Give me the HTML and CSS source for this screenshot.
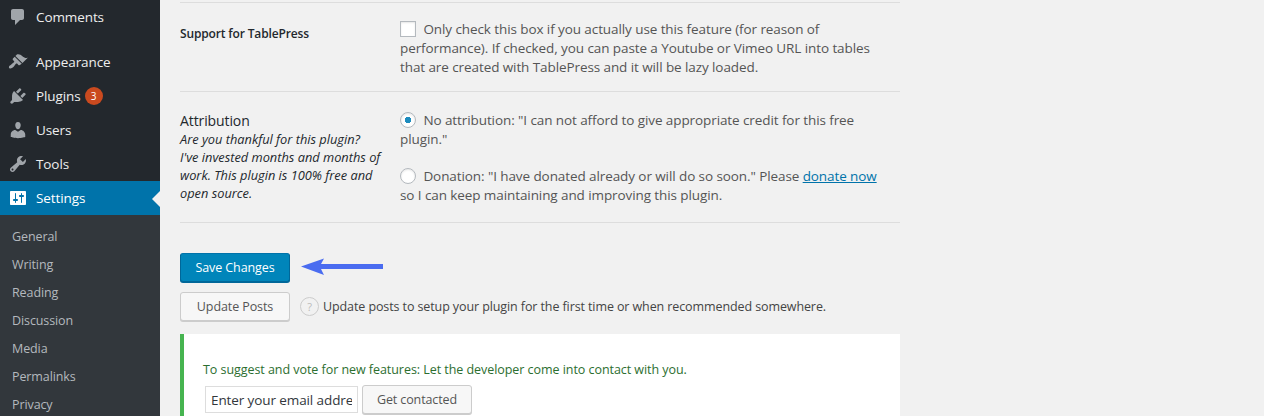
FILE: index.html
```html
<!DOCTYPE html>
<html lang="en">
<head>
  <meta charset="UTF-8">
  <title>Settings</title>
  <link rel="stylesheet" href="styles.css">
</head>
<body>

  <div class="sidebar">
    <ul class="menu">
      <li class="menu-item menu-gap">
        <svg class="menu-icon" viewBox="0 0 20 20"><path d="M5 2h9c1.1 0 2 .9 2 2v7c0 1.1-.9 2-2 2h-2l-5 5v-5H5c-1.1 0-2-.9-2-2V4c0-1.1.9-2 2-2z"/></svg>
        Comments
      </li>
      <li class="menu-item">
        <svg class="menu-icon" viewBox="0 0 20 20"><path d="M14.48 11.06L7.41 3.99l1.5-1.5c.5-.56 2.3-.47 3.51.32 1.21.8 1.43 1.28 2.91 2.1 1.18.64 2.45 1.26 4.45.85zm-.71.71L6.7 4.7 4.93 6.47c-.39.39-.39 1.02 0 1.41l1.06 1.06c.39.39.39 1.03 0 1.42-.6.6-1.43 1.11-2.21 1.69-.35.26-.7.53-1.01.84C1.43 13.23.4 14.85 1.19 15.94c.79 1.08 2.85.5 4.22-.87.31-.31.58-.66.84-1.01.58-.78 1.09-1.61 1.69-2.21.39-.39 1.02-.39 1.41 0l1.06 1.06c.39.39 1.02.39 1.41 0z"/></svg>
        Appearance
      </li>
      <li class="menu-item">
        <svg class="menu-icon" viewBox="0 0 20 20"><path d="M13.11 4.36L9.87 7.6 8 5.73l3.24-3.24c.35-.34 1.05-.2 1.56.32.52.51.66 1.21.31 1.55zm-8 1.77l.91-1.12 9.01 9.01-1.19.84c-.71.71-2.63 1.16-3.82 1.16H6.14L4.9 17.26c-.59.59-1.54.59-2.12 0-.59-.58-.59-1.53 0-2.12l1.24-1.24v-3.88c0-1.13.4-3.19 1.09-3.89zm7.26 3.97l3.24-3.24c.34-.35 1.04-.21 1.55.31.52.51.66 1.21.31 1.55l-3.24 3.25z"/></svg>
        Plugins <span class="count">3</span>
      </li>
      <li class="menu-item">
        <svg class="menu-icon" viewBox="0 0 20 20"><path d="M10 9.25c-2.27 0-2.73-3.44-2.73-3.44C7 4.02 7.82 2 9.97 2c2.16 0 2.98 2.02 2.71 3.81 0 0-.41 3.44-2.68 3.44zm0 2.57L12.72 10c2.39 0 4.52 2.33 4.52 4.53v2.49s-3.65 1.13-7.24 1.13c-3.65 0-7.24-1.13-7.24-1.13v-2.49c0-2.25 1.94-4.48 4.47-4.48z"/></svg>
        Users
      </li>
      <li class="menu-item">
        <svg class="menu-icon" viewBox="0 0 20 20"><path d="M16.68 9.77c-1.34 1.34-3.3 1.67-4.95.99l-5.41 6.52c-.99.99-2.59.99-3.58 0s-.99-2.59 0-3.57l6.52-5.42c-.68-1.65-.35-3.61.99-4.95 1.28-1.28 3.12-1.62 4.72-1.06l-2.89 2.89 2.82 2.82 2.86-2.87c.53 1.58.18 3.39-1.08 4.65zM3.81 16.21c.4.39 1.04.39 1.43 0 .4-.4.4-1.04 0-1.43-.39-.4-1.03-.4-1.43 0-.39.39-.39 1.03 0 1.43z"/></svg>
        Tools
      </li>
      <li class="menu-item current">
        <svg class="menu-icon" viewBox="0 0 20 20"><path d="M18 16V4c0-.55-.45-1-1-1H3c-.55 0-1 .45-1 1v12c0 .55.45 1 1 1h14c.55 0 1-.45 1-1zM8 11h1c.55 0 1 .45 1 1s-.45 1-1 1H8v1.5c0 .28-.22.5-.5.5s-.5-.22-.5-.5V13H6c-.55 0-1-.45-1-1s.45-1 1-1h1V5.5c0-.28.22-.5.5-.5s.5.22.5.5V11zm5-2h-1c-.55 0-1-.45-1-1s.45-1 1-1h1V5.5c0-.28.22-.5.5-.5s.5.22.5.5V7h1c.55 0 1 .45 1 1s-.45 1-1 1h-1v5.5c0 .28-.22.5-.5.5s-.5-.22-.5-.5V9z"/></svg>
        Settings
      </li>
    </ul>
    <ul class="submenu">
      <li>General</li>
      <li>Writing</li>
      <li>Reading</li>
      <li>Discussion</li>
      <li>Media</li>
      <li>Permalinks</li>
      <li>Privacy</li>
    </ul>
  </div>

  <div class="content">
    <div class="form-row row-tablepress">
      <div class="row-label"><strong>Support for TablePress</strong></div>
      <div class="row-field">
        <p><input type="checkbox" class="check"> Only check this box if you actually use this feature (for reason of performance). If checked, you can paste a Youtube or Vimeo URL into tables that are created with TablePress and it will be lazy loaded.</p>
      </div>
    </div>

    <div class="form-row row-attribution">
      <div class="row-label">
        <div class="label-title">Attribution</div>
        <em>Are you thankful for this plugin?<br>I've invested months and months of work. This plugin is 100% free and open source.</em>
      </div>
      <div class="row-field">
        <p class="option"><input type="radio" name="attribution" class="radio" checked> No attribution: "I can not afford to give appropriate credit for this free plugin."</p>
        <p><input type="radio" name="attribution" class="radio"> Donation: "I have donated already or will do so soon." Please <a href="#">donate now</a> so I can keep maintaining and improving this plugin.</p>
      </div>
    </div>

    <div class="save-row">
      <button class="btn btn-primary">Save Changes</button>
      <svg class="arrow" width="82" height="18" viewBox="0 0 82 18"><path d="M0 8.5L23 .5 20 6h62v5H20l3 6z"/></svg>
    </div>

    <div class="update-row">
      <button class="btn">Update Posts</button>
      <span class="help">?</span>
      <span class="update-text">Update posts to setup your plugin for the first time or when recommended somewhere.</span>
    </div>

    <div class="notice">
      <p>To suggest and vote for new features: Let the developer come into contact with you.</p>
      <div class="contact-form">
        <input type="text" class="email" placeholder="Enter your email address">
        <button class="btn">Get contacted</button>
      </div>
    </div>
  </div>

</body>
</html>
```

FILE: styles.css
```css
html, body {
  margin: 0;
  padding: 0;
  height: 416px;
  overflow: hidden;
}

body {
  display: flex;
  font-family: "Open Sans", sans-serif;
  font-size: 12.5px;
  letter-spacing: -0.1px;
  line-height: 19px;
  color: #444;
  background-color: #f1f1f1;
}

.sidebar {
  width: 160px;
  flex-shrink: 0;
  background-color: #23282d;
}

.menu, .submenu {
  list-style: none;
  margin: 0;
  padding: 0;
}

.menu-item {
  display: flex;
  align-items: center;
  height: 34px;
  font-size: 13.5px;
  color: #eee;
  position: relative;
}

.menu-gap {
  margin-bottom: 11px;
}

.menu-icon {
  width: 20px;
  height: 20px;
  margin: 0 8px;
  fill: #a0a5aa;
}

.count {
  display: inline-block;
  width: 18px;
  height: 18px;
  margin-left: 4px;
  border-radius: 50%;
  background-color: #ca4a1f;
  color: #fff;
  font-size: 10px;
  line-height: 18px;
  text-align: center;
}

.current {
  background-color: #0073aa;
  color: #fff;
}

.current .menu-icon {
  fill: #fff;
}

.current::after {
  content: "";
  position: absolute;
  right: 0;
  top: 10px;
  border: 8px solid transparent;
  border-right-color: #f1f1f1;
  border-left-width: 0;
}

.submenu {
  background-color: #32373c;
  padding-top: 8px;
  height: 193px;
}

.submenu li {
  height: 28px;
  line-height: 28px;
  padding-left: 12px;
  color: #b4b9be;
}

.content {
  width: 720px;
  padding: 2px 0 0 20px;
}

.form-row {
  display: grid;
  grid-template-columns: 220px 485px;
  border-top: 1px solid #ddd;
}

.row-tablepress {
  height: 88px;
}

.row-attribution {
  height: 130px;
  border-bottom: 1px solid #ddd;
}

.row-label strong {
  display: block;
  margin-top: 21px;
  font-size: 12px;
  font-weight: 600;
  letter-spacing: -0.15px;
  color: #23282d;
}

.label-title {
  margin-top: 19px;
  font-size: 14px;
  font-weight: 500;
  letter-spacing: -0.1px;
  color: #23282d;
}

.row-label em {
  display: block;
  width: 205px;
  font-size: 12.8px;
  line-height: 18px;
  letter-spacing: 0;
  color: #23282d;
}

.row-field {
  font-size: 13.5px;
  letter-spacing: -0.09px;
  color: #555;
}

.row-field p {
  margin: 0;
}

.row-tablepress .row-field {
  padding-top: 17px;
}

.row-attribution .row-field {
  padding-top: 19px;
}

.row-field .option {
  margin-bottom: 18px;
}

a {
  color: #0073aa;
}

.check, .radio {
  appearance: none;
  width: 16px;
  height: 16px;
  margin: 0 4px 0 0;
  border: 1px solid #b4b9be;
  background-color: #fff;
  box-shadow: inset 0 1px 2px rgba(0, 0, 0, 0.1);
  vertical-align: -3px;
}

.radio {
  border-radius: 50%;
}

.radio:checked {
  background-image: radial-gradient(circle, #1e8cbe 0, #1e8cbe 3px, transparent 3.5px);
}

.save-row {
  display: flex;
  align-items: center;
  gap: 11px;
  margin-top: 30px;
}

.arrow {
  fill: #4a6cf0;
  margin-top: -2px;
}

.update-row {
  display: flex;
  align-items: center;
  margin-top: 10px;
}

.btn {
  font-family: inherit;
  font-size: 12.5px;
  letter-spacing: -0.1px;
  height: 29px;
  width: 110px;
  padding: 0;
  border: 1px solid #ccc;
  border-radius: 3px;
  background-color: #f7f7f7;
  box-shadow: 0 1px 0 #ccc;
  color: #555;
}

.btn-primary {
  background-color: #0085ba;
  border-color: #0073aa #006799 #006799;
  box-shadow: 0 1px 0 #006799;
  color: #fff;
}

.help {
  width: 17px;
  height: 17px;
  margin-left: 10px;
  margin-right: 4px;
  border: 1px solid #ccc;
  border-radius: 50%;
  font-size: 11px;
  line-height: 17px;
  text-align: center;
  color: #bbb;
}

.notice {
  box-sizing: border-box;
  height: 82px;
  margin-top: 13px;
  padding: 26px 0 0 19px;
  border-left: 4px solid #46b450;
  background-color: #fff;
}

.notice p {
  margin: 0 0 6px;
  letter-spacing: -0.05px;
  color: #2c6e2f;
}

.contact-form {
  display: flex;
  align-items: center;
  gap: 4px;
  margin-left: 2px;
}

.email {
  width: 153px;
  height: 27px;
  padding: 0 5px;
  box-sizing: border-box;
  border: 1px solid #ddd;
  font-family: inherit;
  font-size: 13.5px;
  letter-spacing: -0.1px;
}

.email::placeholder {
  color: #32373c;
  opacity: 1;
}
```
